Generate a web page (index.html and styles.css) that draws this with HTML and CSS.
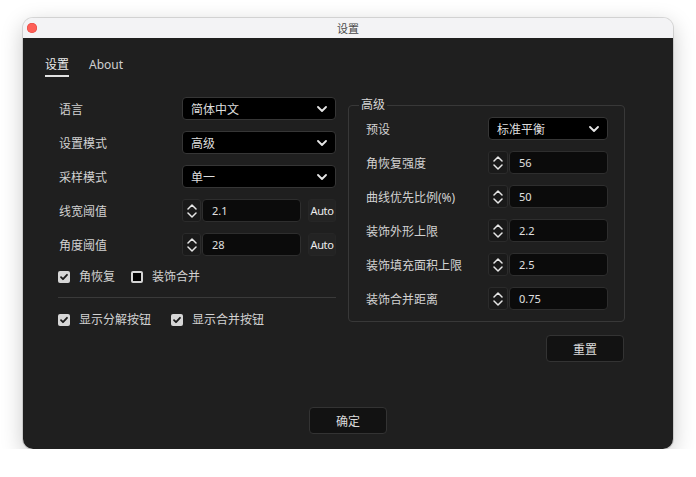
FILE: index.html
```html
<!DOCTYPE html>
<html lang="zh-CN">
<head>
    <meta charset="UTF-8">
    <title>设置</title>
    <link rel="stylesheet" href="styles.css">
</head>
<body>

<div class="window">
    <div class="titlebar">
        <span class="close-dot"></span>
        <span class="title">设置</span>
        <span></span>
    </div>

    <div class="content">
        <div class="tabs">
            <span class="tab active">设置</span>
            <span class="tab">About</span>
        </div>

        <div class="main">
            <div class="left">
                <div class="row">
                    <span class="label">语言</span>
                    <div class="combo">简体中文<svg class="chev" width="10" height="6" viewBox="0 0 10 6"><path d="M1 1l4 4 4-4" /></svg></div>
                </div>
                <div class="row">
                    <span class="label">设置模式</span>
                    <div class="combo">高级<svg class="chev" width="10" height="6" viewBox="0 0 10 6"><path d="M1 1l4 4 4-4" /></svg></div>
                </div>
                <div class="row">
                    <span class="label">采样模式</span>
                    <div class="combo">单一<svg class="chev" width="10" height="6" viewBox="0 0 10 6"><path d="M1 1l4 4 4-4" /></svg></div>
                </div>
                <div class="row">
                    <span class="label">线宽阈值</span>
                    <div class="spin"><svg width="10" height="18" viewBox="0 0 10 18"><path d="M1 7l4-4 4 4M1 11l4 4 4-4" /></svg></div>
                    <div class="input">2.1</div>
                    <div class="auto">Auto</div>
                </div>
                <div class="row">
                    <span class="label">角度阈值</span>
                    <div class="spin"><svg width="10" height="18" viewBox="0 0 10 18"><path d="M1 7l4-4 4 4M1 11l4 4 4-4" /></svg></div>
                    <div class="input">28</div>
                    <div class="auto">Auto</div>
                </div>

                <div class="checks first">
                    <label class="check"><span class="box on"><svg width="10" height="10" viewBox="0 0 10 10"><path d="M2 5.2l2 2 4-4.4" /></svg></span>角恢复</label>
                    <label class="check"><span class="box"></span>装饰合并</label>
                </div>
                <div class="sep"></div>
                <div class="checks second">
                    <label class="check"><span class="box on"><svg width="10" height="10" viewBox="0 0 10 10"><path d="M2 5.2l2 2 4-4.4" /></svg></span>显示分解按钮</label>
                    <label class="check"><span class="box on"><svg width="10" height="10" viewBox="0 0 10 10"><path d="M2 5.2l2 2 4-4.4" /></svg></span>显示合并按钮</label>
                </div>
            </div>

            <div class="right">
                <fieldset class="group">
                    <legend>高级</legend>
                    <div class="row">
                        <span class="label">预设</span>
                        <div class="combo">标准平衡<svg class="chev" width="10" height="6" viewBox="0 0 10 6"><path d="M1 1l4 4 4-4" /></svg></div>
                    </div>
                    <div class="row">
                        <span class="label">角恢复强度</span>
                        <div class="spin"><svg width="10" height="18" viewBox="0 0 10 18"><path d="M1 7l4-4 4 4M1 11l4 4 4-4" /></svg></div>
                        <div class="input">56</div>
                    </div>
                    <div class="row">
                        <span class="label">曲线优先比例(%)</span>
                        <div class="spin"><svg width="10" height="18" viewBox="0 0 10 18"><path d="M1 7l4-4 4 4M1 11l4 4 4-4" /></svg></div>
                        <div class="input">50</div>
                    </div>
                    <div class="row">
                        <span class="label">装饰外形上限</span>
                        <div class="spin"><svg width="10" height="18" viewBox="0 0 10 18"><path d="M1 7l4-4 4 4M1 11l4 4 4-4" /></svg></div>
                        <div class="input">2.2</div>
                    </div>
                    <div class="row">
                        <span class="label">装饰填充面积上限</span>
                        <div class="spin"><svg width="10" height="18" viewBox="0 0 10 18"><path d="M1 7l4-4 4 4M1 11l4 4 4-4" /></svg></div>
                        <div class="input">2.5</div>
                    </div>
                    <div class="row">
                        <span class="label">装饰合并距离</span>
                        <div class="spin"><svg width="10" height="18" viewBox="0 0 10 18"><path d="M1 7l4-4 4 4M1 11l4 4 4-4" /></svg></div>
                        <div class="input">0.75</div>
                    </div>
                </fieldset>
                <div class="reset-wrap">
                    <button class="btn">重置</button>
                </div>
            </div>
        </div>

        <div class="footer">
            <button class="btn">确定</button>
        </div>
    </div>
</div>

</body>
</html>
```

FILE: styles.css
```css
body {
    margin: 0;
    background: #ffffff;
    font-family: "Noto Sans", "Noto Sans CJK SC", sans-serif;
    font-size: 12px;
}
.window {
    margin: 18px 0 0 23px;
    width: 650px;
    height: 431px;
    border-radius: 10px;
    overflow: hidden;
    box-shadow: 0 6px 22px rgba(0, 0, 0, 0.22), 0 0 0 1px rgba(0, 0, 0, 0.12);
    display: flex;
    flex-direction: column;
}
.titlebar {
    height: 20px;
    background: #f3f3f5;
    display: grid;
    grid-template-columns: 1fr auto 1fr;
    align-items: center;
}
.close-dot {
    width: 10px;
    height: 10px;
    margin-left: 4px;
    border-radius: 50%;
    background: #fe5f57;
    box-shadow: inset 0 0 0 0.5px #e0443e;
}
.title {
    font-size: 11px;
    color: #4a4a4a;
}
.content {
    flex: 1;
    background: #1f1f1f;
    display: flex;
    flex-direction: column;
    color: #d2d2d2;
}
.tabs {
    display: flex;
    gap: 20px;
    padding: 19px 0 0 22px;
}
.tab {
    line-height: 16px;
    padding-bottom: 2px;
    color: #cfcfcf;
}
.tab.active {
    color: #ececec;
    border-bottom: 2px solid #e2e2e2;
}
.main {
    display: flex;
    align-items: flex-start;
    gap: 12px;
    margin: 20px 0 0 35px;
}
.left {
    width: 278px;
    display: flex;
    flex-direction: column;
    gap: 11px;
}
.row {
    display: flex;
    align-items: center;
    height: 23px;
}
.label {
    width: 123px;
    padding-left: 1px;
    white-space: nowrap;
}
.combo {
    flex: 1;
    height: 23px;
    box-sizing: border-box;
    background: #000;
    border: 1px solid #363636;
    border-radius: 4px;
    padding: 0 8px;
    display: flex;
    align-items: center;
    justify-content: space-between;
    color: #dedede;
}
.chev path,
.spin path {
    fill: none;
    stroke: #e6e6e6;
    stroke-width: 1.8;
    stroke-linecap: round;
    stroke-linejoin: round;
}
.spin {
    width: 19px;
    height: 23px;
    box-sizing: border-box;
    border: 1px solid #2b2b2b;
    border-radius: 3px;
    background: #1a1a1a;
    display: flex;
    align-items: center;
    justify-content: center;
    margin-right: 1px;
}
.spin path {
    stroke-width: 1.5;
}
.input {
    flex: 1;
    height: 23px;
    box-sizing: border-box;
    background: #0b0b0b;
    border: 1px solid #2e2e2e;
    border-radius: 4px;
    padding-left: 9px;
    display: flex;
    align-items: center;
    font-size: 11px;
    color: #e0e0e0;
}
.auto {
    width: 28px;
    height: 23px;
    margin-left: 7px;
    box-sizing: border-box;
    border: 1px solid #262626;
    border-radius: 3px;
    background: #232323;
    display: flex;
    align-items: center;
    justify-content: center;
    font-size: 11px;
    letter-spacing: -0.4px;
    color: #ececec;
}
.checks {
    display: flex;
    height: 16px;
    align-items: center;
}
.checks.first {
    margin-top: 2px;
    gap: 16px;
}
.checks.second {
    margin-top: 3px;
    gap: 20px;
}
.check {
    display: flex;
    align-items: center;
    gap: 9px;
    line-height: 16px;
}
.box {
    width: 12px;
    height: 12px;
    box-sizing: border-box;
    border: 2px solid #d4d4d4;
    border-radius: 2px;
    background: #000;
    display: flex;
    align-items: center;
    justify-content: center;
}
.box.on {
    background: #d6d6d6;
    border: none;
}
.box path {
    fill: none;
    stroke: #1a1a1a;
    stroke-width: 1.8;
    stroke-linecap: round;
    stroke-linejoin: round;
}
.sep {
    height: 1px;
    background: #3a3a3a;
    margin-top: 1px;
}
.right {
    width: 277px;
    display: flex;
    flex-direction: column;
}
.group {
    margin: 0;
    padding: 4px 16px 11px 17px;
    border: 1px solid #383838;
    border-radius: 4px;
    display: flex;
    flex-direction: column;
    gap: 11px;
}
.group legend {
    margin-left: -7px;
    padding: 0 2px;
    line-height: 16px;
    color: #d6d6d6;
}
.group .label {
    width: 122px;
    padding-left: 0;
}
.group .spin {
    width: 20px;
}
.reset-wrap {
    display: flex;
    justify-content: flex-end;
    margin-top: 13px;
    padding-right: 1px;
}
.btn {
    width: 78px;
    height: 27px;
    background: #121212;
    border: 1px solid #333;
    border-radius: 4px;
    color: #dcdcdc;
    font-family: "Noto Sans", "Noto Sans CJK SC", sans-serif;
    font-size: 12px;
    padding: 0;
}
.footer {
    margin-top: auto;
    padding-bottom: 15px;
    display: flex;
    justify-content: center;
}
```
